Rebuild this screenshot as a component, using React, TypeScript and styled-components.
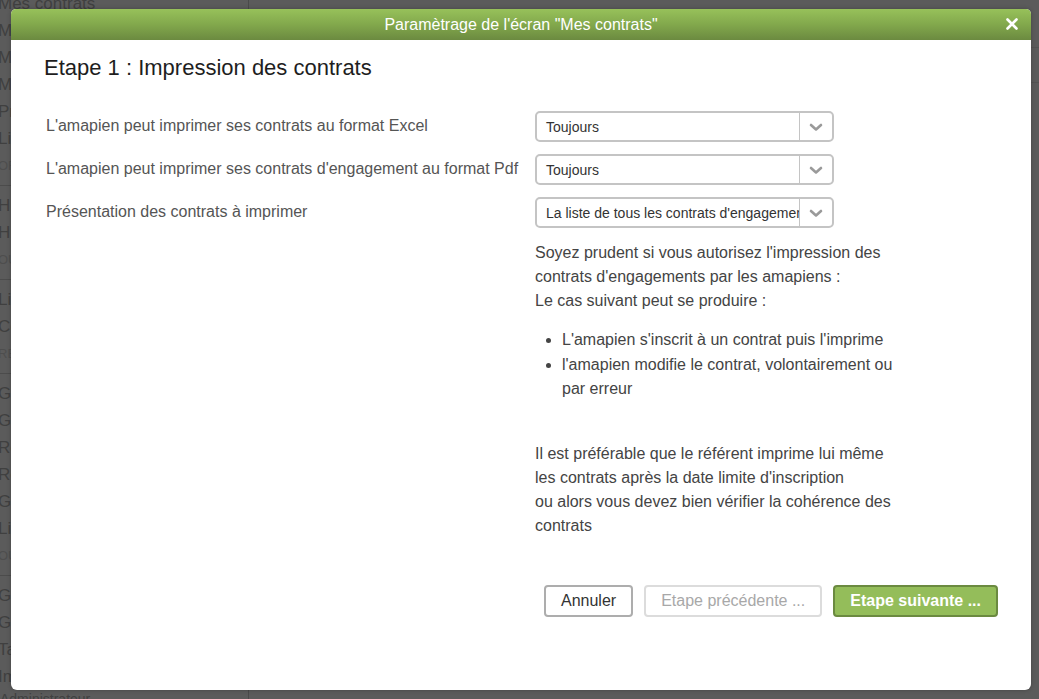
import { FC } from 'react';
import styled, { createGlobalStyle } from 'styled-components';

const GlobalStyle = createGlobalStyle`
  html, body {
    margin: 0;
    padding: 0;
    width: 100%;
    height: 100%;
    overflow: hidden;
    font-family: "Liberation Sans", Arial, sans-serif;
  }
  #root {
    height: 100%;
  }
`;

// Page behind the modal (dimmed)
const Page = styled.div`
  position: relative;
  width: 1039px;
  height: 699px;
  display: flex;
  background: #5b5b5b;
  overflow: hidden;
`;

const Sidebar = styled.div`
  width: 248px;
  flex-shrink: 0;
  border-right: 1px solid #4a4a4a;
  display: flex;
  flex-direction: column;
  margin-top: -10px;
`;

const MenuItem = styled.div<{ $section?: boolean }>`
  height: 27px;
  line-height: 27px;
  font-size: ${(p) => (p.$section ? '13px' : '17px')};
  color: ${(p) => (p.$section ? '#4e4e4e' : '#404040')};
  text-transform: ${(p) => (p.$section ? 'uppercase' : 'none')};
  white-space: nowrap;
  margin-left: -2px;
`;

const MenuSep = styled.div`
  height: 0;
  border-top: 1px solid #4c4c4c;
  margin: 6px 0;
`;

const Content = styled.div`
  flex: 1;
  display: flex;
  flex-direction: column;
`;

const ContentLine = styled.div`
  height: 34px;
  border-bottom: 1px solid #535353;
  &:first-child {
    height: 47px;
  }
`;

const Footer = styled.div`
  position: absolute;
  left: 0;
  bottom: -8px;
  font-size: 14px;
  color: #404040;
`;

// Modal
const Dialog = styled.div`
  position: absolute;
  left: 11px;
  top: 9px;
  width: 1020px;
  height: 681px;
  background: #ffffff;
  border-radius: 5px 5px 6px 6px;
  display: flex;
  flex-direction: column;
  overflow: hidden;
  box-shadow: 0 0 4px rgba(0, 0, 0, 0.25);
`;

const TitleBar = styled.div`
  height: 31px;
  background: linear-gradient(to bottom, #97c15a 0%, #82a84c 50%, #6b8a40 100%);
  display: flex;
  align-items: center;
  justify-content: center;
  position: relative;
  color: #ffffff;
  font-size: 16px;
`;

const CloseButton = styled.button`
  position: absolute;
  right: 10px;
  top: 6px;
  width: 18px;
  height: 18px;
  padding: 0;
  border: none;
  background: transparent;
  display: flex;
  align-items: center;
  justify-content: center;
  cursor: pointer;
`;

const Body = styled.div`
  padding: 15px 33px 0 33px;
  display: flex;
  flex-direction: column;
`;

const Heading = styled.h1`
  margin: 0 0 30px 0;
  font-size: 22px;
  font-weight: normal;
  color: #1e1e1e;
  line-height: 26px;
`;

const FormRow = styled.div`
  display: flex;
  align-items: flex-start;
  margin-bottom: 12px;
`;

const Label = styled.div`
  width: 488px;
  padding-left: 2px;
  padding-top: 6px;
  font-size: 16px;
  color: #555555;
  white-space: nowrap;
`;

const Select = styled.div`
  width: 295px;
  height: 27px;
  border: 2px solid #c4c4c4;
  border-radius: 5px;
  display: flex;
  align-items: stretch;
  background: #fff;
  margin-left: 1px;
`;

const SelectValue = styled.div`
  flex: 1;
  padding-left: 9px;
  display: flex;
  align-items: center;
  font-size: 14px;
  color: #333;
  white-space: nowrap;
  overflow: hidden;
`;

const SelectArrow = styled.div`
  width: 32px;
  border-left: 1px solid #c4c4c4;
  display: flex;
  align-items: center;
  justify-content: center;
`;

const Help = styled.div`
  margin-left: 491px;
  margin-top: 1px;
  font-size: 16px;
  line-height: 24px;
  color: #444444;
`;

const Bullets = styled.ul`
  margin: 15px 0 40px 0;
  padding-left: 27px;
  li {
    line-height: 24.5px;
  }
`;

const Actions = styled.div`
  display: flex;
  gap: 11px;
  margin-left: 500px;
  margin-top: 47px;
`;

const Button = styled.button<{ $variant: 'default' | 'disabled' | 'primary' }>`
  height: 32px;
  padding: 0 15px;
  border-radius: 4px;
  font-family: "Liberation Sans", Arial, sans-serif;
  font-size: 16px;
  border: 2px solid
    ${(p) => (p.$variant === 'primary' ? '#6b8a40' : p.$variant === 'disabled' ? '#dcdcdc' : '#adadad')};
  background: ${(p) => (p.$variant === 'primary' ? '#94bd5a' : '#ffffff')};
  color: ${(p) => (p.$variant === 'primary' ? '#ffffff' : p.$variant === 'disabled' ? '#a8a8a8' : '#333333')};
  font-weight: ${(p) => (p.$variant === 'primary' ? 'bold' : 'normal')};
  cursor: pointer;
`;

const Chevron: FC = () => (
  <svg width="14" height="10" viewBox="0 0 14 10">
    <path d="M2 3 L7 7.5 L12 3" fill="none" stroke="#9a9a9a" strokeWidth="2.6" strokeLinecap="round" strokeLinejoin="round" />
  </svg>
);

const menu: { label: string; section?: boolean; sep?: boolean }[] = [
  { label: 'Mes contrats' },
  { label: 'Mes livraisons' },
  { label: 'Mes paiements' },
  { label: 'Mon profil' },
  { label: 'Producteurs' },
  { label: 'Liste des adhérents' },
  { label: 'ORGANISATION', section: true, sep: true },
  { label: 'Historique des contrats' },
  { label: 'Historique des paiements' },
  { label: 'OUTILS', section: true, sep: true },
  { label: 'Livraisons' },
  { label: 'Contrats' },
  { label: 'RÉFÉRENTS', section: true, sep: true },
  { label: 'Gestion des contrats' },
  { label: 'Gestion des paiements' },
  { label: 'Réceptions des chèques' },
  { label: 'Remise de chèques' },
  { label: 'Gestion des producteurs' },
  { label: 'Livraisons' },
  { label: 'OUTILS', section: true, sep: true },
  { label: 'Gestion des adhérents' },
  { label: 'Gestion des permanences' },
  { label: 'Tableaux de bord' },
  { label: 'Impressions' },
];

const App: FC = () => {
  return (
    <>
      <GlobalStyle />
      <Page>
        <Sidebar>
          {menu.map((m, i) => (
            <div key={i}>
              <MenuItem $section={m.section}>{m.label}</MenuItem>
              {m.sep && <MenuSep />}
            </div>
          ))}
        </Sidebar>
        <Content>
          <ContentLine />
          <ContentLine />
        </Content>
        <Footer>Administrateur</Footer>

        <Dialog>
          <TitleBar>
            Paramètrage de l'écran "Mes contrats"
            <CloseButton aria-label="Fermer">
              <svg width="12" height="12" viewBox="0 0 12 12">
                <path d="M1.5 1.5 L10.5 10.5 M10.5 1.5 L1.5 10.5" stroke="#ffffff" strokeWidth="2.6" strokeLinecap="round" />
              </svg>
            </CloseButton>
          </TitleBar>

          <Body>
            <Heading>Etape 1 : Impression des contrats</Heading>

            <FormRow>
              <Label>L'amapien peut imprimer ses contrats au format Excel</Label>
              <Select>
                <SelectValue>Toujours</SelectValue>
                <SelectArrow><Chevron /></SelectArrow>
              </Select>
            </FormRow>

            <FormRow>
              <Label>L'amapien peut imprimer ses contrats d'engagement au format Pdf</Label>
              <Select>
                <SelectValue>Toujours</SelectValue>
                <SelectArrow><Chevron /></SelectArrow>
              </Select>
            </FormRow>

            <FormRow>
              <Label>Présentation des contrats à imprimer</Label>
              <Select>
                <SelectValue>La liste de tous les contrats d'engagement</SelectValue>
                <SelectArrow><Chevron /></SelectArrow>
              </Select>
            </FormRow>

            <Help>
              Soyez prudent si vous autorisez l'impression des
              <br />
              contrats d'engagements par les amapiens :
              <br />
              Le cas suivant peut se produire :
              <Bullets>
                <li>L'amapien s'inscrit à un contrat puis l'imprime</li>
                <li>
                  l'amapien modifie le contrat, volontairement ou
                  <br />
                  par erreur
                </li>
              </Bullets>
              Il est préférable que le référent imprime lui même
              <br />
              les contrats après la date limite d'inscription
              <br />
              ou alors vous devez bien vérifier la cohérence des
              <br />
              contrats
            </Help>

            <Actions>
              <Button $variant="default">Annuler</Button>
              <Button $variant="disabled">Etape précédente ...</Button>
              <Button $variant="primary">Etape suivante ...</Button>
            </Actions>
          </Body>
        </Dialog>
      </Page>
    </>
  );
};

export default App;
